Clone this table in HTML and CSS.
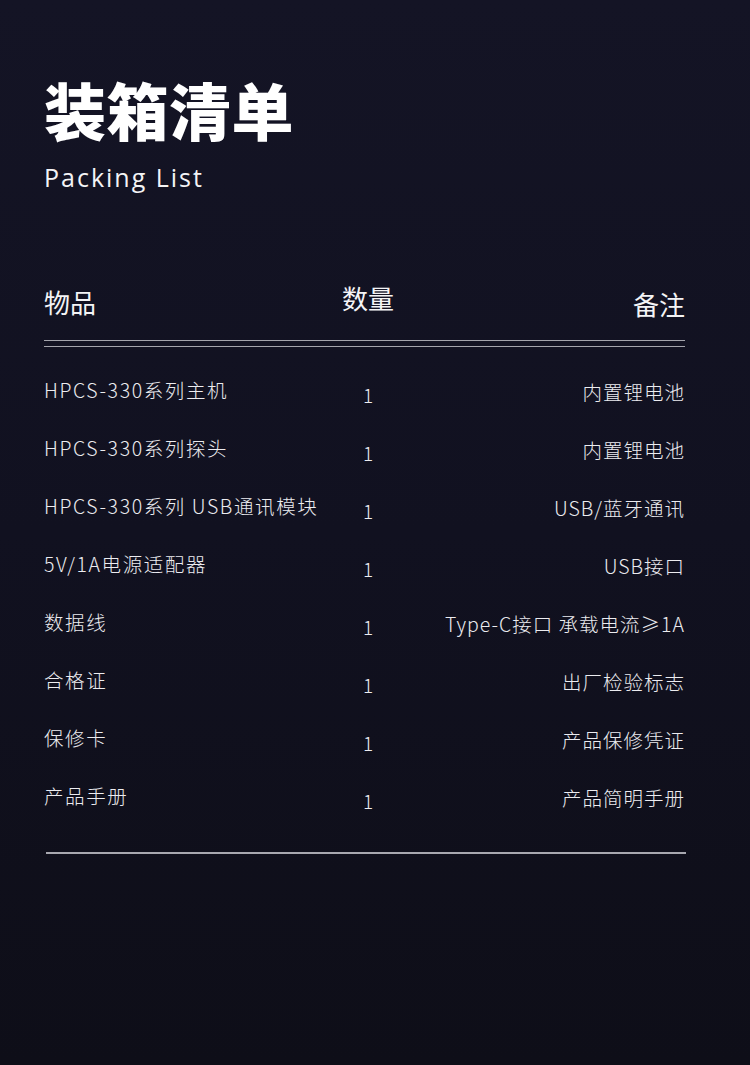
FILE: index.html
```html
<!DOCTYPE html>
<html lang="zh-CN">
<head>
<meta charset="utf-8">
<link rel="stylesheet" href="styles.css">
</head>
<body>
<div class="page">
  <header class="hero">
    <h1 class="title">装箱清单</h1>
    <p class="subtitle">Packing List</p>
  </header>

  <div class="table">
    <div class="head">
      <div class="h-item">物品</div>
      <div class="h-qty">数量</div>
      <div class="h-note">备注</div>
    </div>
    <div class="double-rule"></div>

    <div class="rows">
      <div class="row"><div class="c-item">HPCS-330系列主机</div><div class="c-qty">1</div><div class="c-note">内置锂电池</div></div>
      <div class="row"><div class="c-item">HPCS-330系列探头</div><div class="c-qty">1</div><div class="c-note">内置锂电池</div></div>
      <div class="row"><div class="c-item">HPCS-330系列 USB通讯模块</div><div class="c-qty">1</div><div class="c-note">USB/蓝牙通讯</div></div>
      <div class="row"><div class="c-item">5V/1A电源适配器</div><div class="c-qty">1</div><div class="c-note">USB接口</div></div>
      <div class="row"><div class="c-item">数据线</div><div class="c-qty">1</div><div class="c-note">Type-C接口 承载电流≥1A</div></div>
      <div class="row"><div class="c-item">合格证</div><div class="c-qty">1</div><div class="c-note">出厂检验标志</div></div>
      <div class="row"><div class="c-item">保修卡</div><div class="c-qty">1</div><div class="c-note">产品保修凭证</div></div>
      <div class="row"><div class="c-item">产品手册</div><div class="c-qty">1</div><div class="c-note">产品简明手册</div></div>
    </div>
    <div class="bottom-rule"></div>
  </div>
</div>
</body>
</html>
```

FILE: styles.css
```css
html, body {
  margin: 0;
  padding: 0;
}
body {
  width: 750px;
  height: 1065px;
  background: linear-gradient(180deg, #141425 0%, #111120 50%, #0e0e18 100%);
  color: #f2f2f4;
  font-family: "Noto Sans CJK SC", "Noto Sans", sans-serif;
  overflow: hidden;
}
.page {
  padding: 0 65px 0 44px;
}
.hero {
  padding-top: 73px;
}
.title {
  margin: 0;
  font-size: 62px;
  line-height: 72px;
  font-weight: 900;
  letter-spacing: 0.5px;
  color: #ffffff;
}
.subtitle {
  margin: 15px 0 0;
  font-family: "Open Sans", "Noto Sans", sans-serif;
  font-size: 25px;
  line-height: 34px;
  letter-spacing: 2px;
  color: #f4f4f6;
}
.table {
  margin-top: 78px;
}
.head {
  display: grid;
  grid-template-columns: 296px 56px 1fr;
  align-items: start;
  height: 68px;
  font-size: 26px;
  line-height: 36px;
  color: #f4f4f6;
}
.h-item { padding-top: 12px; }
.h-qty { padding-top: 8px; text-align: center; }
.h-note { padding-top: 14px; text-align: right; }
.double-rule {
  height: 4.5px;
  border-top: 1.5px solid #a4a4ac;
  border-bottom: 1.5px solid #a4a4ac;
}
.rows {
  padding-top: 30px;
}
.row {
  display: grid;
  grid-template-columns: 300px 48px 1fr;
  height: 58px;
  align-items: start;
  font-size: 19.5px;
  line-height: 26px;
  font-weight: 300;
  color: #ececf0;
}
.c-item {
  letter-spacing: 1.6px;
}
.c-qty {
  padding-top: 5px;
  text-align: center;
  font-size: 19px;
}
.c-note {
  padding-top: 2px;
  text-align: right;
  letter-spacing: 1px;
}
.bottom-rule {
  margin: 11px -1px 0 2px;
  height: 0;
  border-top: 2px solid #a8a8b0;
}
```
